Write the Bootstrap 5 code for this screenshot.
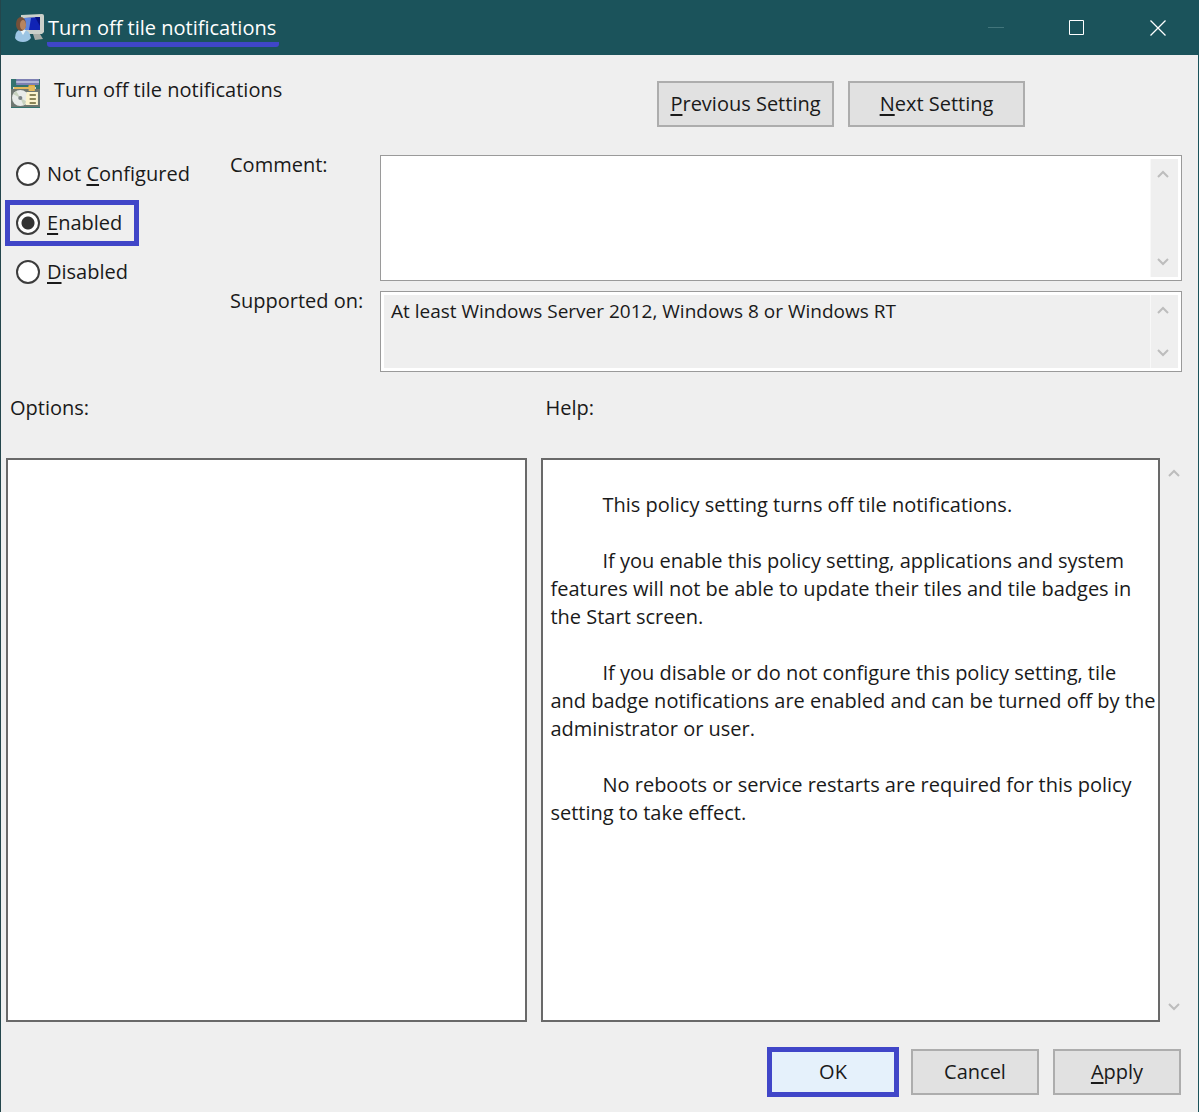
<!DOCTYPE html>
<html lang="en">
<head>
<meta charset="utf-8">
<meta name="viewport" content="width=device-width, initial-scale=1">
<title>Turn off tile notifications</title>
<link href="https://cdn.jsdelivr.net/npm/bootstrap@5.3.0/dist/css/bootstrap.min.css" rel="stylesheet">
<style>
  :root { --accent: #4046c8; --face: #efefef; --teal: #1b535b; }
  body { font-family: "Open Sans", "Noto Sans", sans-serif; font-size: 20px; line-height: 28px; color: #1a1a1a; background: var(--face); }
  .policy-window { border-left: 1px solid #24464c; border-right: 1px solid var(--teal); }
  .title-bar { background: var(--teal); color: #fff; height: 55px; padding-left: 14px; }
  .title-text { font-size: 20px; line-height: 28px; border-bottom: 5px solid var(--accent); border-radius: 3px; padding: 0 3px 0 1px; margin: 5px 0 0 3px; }
  .caption-btn { width: 81px; height: 55px; border: 0; background: transparent; color: #fff; padding: 0 0 3px; }
  .caption-btn:disabled { color: #42757b; }
  .setting-head { padding: 21px 173px 0 10px; height: 96px; }
  .setting-icon { margin-top: 3px; }
  .setting-name { margin-left: 14px; }
  .setting-nav { gap: 14px; padding-top: 5px; }
  .win-btn { height: 46px; width: 128px; padding: 0; border: 2px solid #adadad; background: #e1e1e1; color: #1a1a1a; border-radius: 0; font-size: 20px; line-height: 28px; }
  .win-btn:hover { background: #e5f1fb; border-color: #0078d7; color: #1a1a1a; }
  .wide-btn { width: 177px; }
  .win-btn.chosen { background: #e5f1fb; border: 3px solid var(--accent); box-shadow: 0 0 0 2px var(--accent); }
  .accel { text-decoration: underline; text-decoration-thickness: 2px; text-underline-offset: 3px; text-decoration-skip-ink: none; }
  .state-col { width: 225px; padding-left: 4px; gap: 3px; }
  .state-item { height: 46px; border: 5px solid transparent; padding: 0 12px 0 6px; gap: 7px; }
  .state-item.chosen { border-color: var(--accent); }
  .state-item input { appearance: none; width: 24px; height: 24px; margin: 0; border: 2px solid #3c3c3c; border-radius: 50%; background: #fff; }
  .state-item input:checked { background: radial-gradient(circle, #333 0 6px, #fff 7px); }
  .field-grid { display: grid; grid-template-columns: 150px 1fr; row-gap: 6px; padding: 0 16px 0 4px; }
  .field-box { border: 1px solid #9a9a9a; background: #fff; padding: 3px; margin-top: 4px; }
  .field-box textarea { border: 0; resize: none; outline: 0; padding: 2px 7px; background: #fff; color: #1a1a1a; overflow: hidden; font-size: 19px; line-height: 28px; }
  .field-box textarea[readonly] { background: var(--face); }
  .comment-box { height: 126px; }
  .support-box { height: 81px; }
  .scroll-strip { width: 28px; background: var(--face); border-left: 1px solid #f8f8f8; color: #bdbdbd; padding: 10px 0; }
  .field-box .scroll-strip { padding-right: 3px; }
  .panes { display: grid; grid-template-columns: 521fr 632fr 28px; grid-template-rows: 64px 1fr; padding: 22px 10px 0 5px; }
  .pane-box { border: 2px solid #696969; background: #fff; }
  .help-col { margin-left: 14px; }
  .help-text { padding: 31px 0 0 7px; white-space: nowrap; overflow: hidden; }
  .help-text p { margin: 0 0 28px; text-indent: 52px; }
  .action-bar { height: 90px; gap: 14px; padding: 9px 17px 0 0; }
</style>
<script src="https://cdn.jsdelivr.net/npm/bootstrap@5.3.0/dist/js/bootstrap.bundle.min.js"></script>
</head>
<body>
<div class="policy-window d-flex flex-column min-vh-100">
  <header class="title-bar d-flex align-items-center">
    <svg width="29" height="28" viewBox="0 0 29 28" aria-hidden="true">
      <path d="M6 1 27 0q2 0 2 2v16l-2 2H12L6 17z" fill="#cbd0ca"/>
      <path d="M9 4 25 3v13H10z" fill="#1023b5"/>
      <path d="M9 4h7l-2 12h-4z" fill="#5d83dc"/>
      <path d="M20 3h5v9z" fill="#071084"/>
      <path d="M18 20h7l3 5-8 1z" fill="#a8ada8"/>
      <path d="M0 24q0-8 7-9 8 1 9 9-3 4-8 4-6 0-8-4z" fill="#9cc5e4"/>
      <path d="m5 16 3 5 3-5z" fill="#edf6fa"/>
      <ellipse cx="6" cy="10" rx="5" ry="7" fill="#755039"/>
      <ellipse cx="8" cy="11" rx="3" ry="5" fill="#b78560"/>
    </svg>
    <h1 class="title-text fw-normal">Turn off tile notifications</h1>
    <div class="d-flex ms-auto">
      <button class="caption-btn" type="button" aria-label="Minimize" disabled><svg width="16" height="16" viewBox="0 0 16 16" fill="none" stroke="currentColor"><path d="M0 7.500h16"/></svg></button>
      <button class="caption-btn" type="button" aria-label="Maximize"><svg width="16" height="16" viewBox="0 0 16 16" fill="none" stroke="currentColor"><path d="M.5.5h14v14H.5z"/></svg></button>
      <button class="caption-btn" type="button" aria-label="Close"><svg width="16" height="16" viewBox="0 0 16 16" fill="none" stroke="currentColor" stroke-width="1.300"><path d="m.5.5 15 15m0-15-15 15"/></svg></button>
    </div>
  </header>

  <section class="setting-head d-flex align-items-start">
    <svg class="setting-icon" width="29" height="29" viewBox="0 0 28 29" preserveAspectRatio="none" aria-hidden="true">
      <path d="M0 0h28v29H0z" fill="#34736f"/>
      <path d="M5 0h22v6H5z" fill="#7d80b3"/>
      <path d="M5 2h22v2H5z" fill="#b5b8d7"/>
      <path d="M2 8h22v5H2z" fill="#dfe5dd"/>
      <path d="M17 6h6v7h-6z" fill="#e3a52d"/>
      <path d="M0 10h28v18H0z" fill="#6e7771"/>
      <path d="M3 8h14v2H3zM17 7h6v5h-6z" fill="#e3b85a"/>
      <circle cx="9" cy="19" r="8" fill="#e8ebe9"/>
      <path d="m9 19-7-4 3-3zM9 19l7 4-4 3z" fill="#c7d2bf"/>
      <circle cx="9" cy="19" r="2" fill="#7b8385"/>
      <path d="M15 13h11v13H14z" fill="#fbf3cf"/>
      <path d="M18 16h6m-6 4h6m-6 4h6" stroke="#8b8457" stroke-width="2"/>
    </svg>
    <span class="setting-name">Turn off tile notifications</span>
    <div class="setting-nav d-flex ms-auto">
      <button class="btn win-btn wide-btn" type="button"><span class="accel">P</span>revious Setting</button>
      <button class="btn win-btn wide-btn" type="button"><span class="accel">N</span>ext Setting</button>
    </div>
  </section>

  <section class="d-flex">
    <div class="state-col d-flex flex-column align-items-start" role="radiogroup" aria-label="Policy state">
      <label class="state-item d-flex align-items-center" for="st-none"><input type="radio" name="state" id="st-none"><span>Not <span class="accel">C</span>onfigured</span></label>
      <label class="state-item chosen d-flex align-items-center" for="st-on"><input type="radio" name="state" id="st-on" checked><span><span class="accel">E</span>nabled</span></label>
      <label class="state-item d-flex align-items-center" for="st-off"><input type="radio" name="state" id="st-off"><span><span class="accel">D</span>isabled</span></label>
    </div>
    <div class="field-grid flex-grow-1">
      <label for="comment">Comment:</label>
      <div class="field-box comment-box d-flex">
        <textarea class="flex-grow-1" id="comment"></textarea>
        <div class="scroll-strip d-flex flex-column justify-content-between align-items-center" aria-hidden="true">
          <svg width="12" height="10" viewBox="0 0 12 10" fill="none" stroke="currentColor" stroke-width="2"><path d="m1 8 5-5 5 5"/></svg>
          <svg width="12" height="10" viewBox="0 0 12 10" fill="none" stroke="currentColor" stroke-width="2"><path d="m1 2 5 5 5-5"/></svg>
        </div>
      </div>
      <label for="supported">Supported on:</label>
      <div class="field-box support-box d-flex">
        <textarea class="flex-grow-1" id="supported" readonly>At least Windows Server 2012, Windows 8 or Windows RT</textarea>
        <div class="scroll-strip d-flex flex-column justify-content-between align-items-center" aria-hidden="true">
          <svg width="12" height="10" viewBox="0 0 12 10" fill="none" stroke="currentColor" stroke-width="2"><path d="m1 8 5-5 5 5"/></svg>
          <svg width="12" height="10" viewBox="0 0 12 10" fill="none" stroke="currentColor" stroke-width="2"><path d="m1 2 5 5 5-5"/></svg>
        </div>
      </div>
    </div>
  </section>

  <section class="panes flex-grow-1">
    <span class="ps-1">Options:</span>
    <span class="help-col ps-1">Help:</span>
    <span></span>
    <div class="pane-box"></div>
    <div class="pane-box help-col help-text">
      <p>This policy setting turns off tile notifications.</p>
      <p>If you enable this policy setting, applications and system<br>features will not be able to update their tiles and tile badges in<br>the Start screen.</p>
      <p>If you disable or do not configure this policy setting, tile<br>and badge notifications are enabled and can be turned off by the<br>administrator or user.</p>
      <p>No reboots or service restarts are required for this policy<br>setting to take effect.</p>
    </div>
    <div class="scroll-strip border-0 d-flex flex-column justify-content-between align-items-center" aria-hidden="true">
      <svg width="12" height="10" viewBox="0 0 12 10" fill="none" stroke="currentColor" stroke-width="2"><path d="m1 8 5-5 5 5"/></svg>
      <svg width="12" height="10" viewBox="0 0 12 10" fill="none" stroke="currentColor" stroke-width="2"><path d="m1 2 5 5 5-5"/></svg>
    </div>
  </section>

  <footer class="action-bar d-flex justify-content-end align-items-center">
    <button class="btn win-btn chosen" type="button">OK</button>
    <button class="btn win-btn" type="button">Cancel</button>
    <button class="btn win-btn" type="button"><span class="accel">A</span>pply</button>
  </footer>
</div>
</body>
</html>
